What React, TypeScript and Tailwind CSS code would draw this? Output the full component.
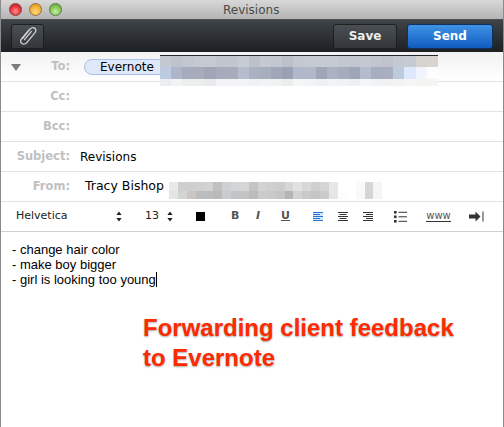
const toRow1 = ["#c4c8d0","#bfc3cb","#c2c6ce","#c5c9d1","#c6cad2","#c1c5cd","#c2c6ce","#c7cbd3","#bdc1c9","#c5c9d1","#c3c7cf","#bcc0c8","#c4c8d0","#c5c9d1","#c6cad2","#c5c9d1","#c3c7cf","#c2c6ce","#c4c8d0","#c1c5cd","#bfc3cb","#c4c8d0","#c6cad2","#d6d3d0","#d8d5d1"];
const toRow2 = ["#bccbe0","#afb6cb","#a6acbd","#a7acbd","#a0a5b8","#a6abbc","#a7acbc","#b6bbce","#a9b2c2","#a7afbf","#a1a6b8","#9ba1b5","#b0b8cb","#b0b8ca","#a0a6b8","#abb2c4","#a6acbe","#9fa6b8","#b4bbce","#a6afc0","#a9afc0","#bccade","#dfe8fb","#eff4fd","#fdfdfe"];
const toRow3 = ["#ebedf0","#f2f3f5","#eceded","#eceded","#e9eaeb","#f3f3f5","#f2f3f4","#f3f4f5","#f0f1f3","#f2f3f4","#f0f1f3","#eceded","#f4f5f6","#f2f3f4","#eff0f1","#f2f3f4","#f1f2f3","#eeeff0","#f4f5f6","#f1f2f3","#f0f1f2","#f3f3f4","#f5f5f6","#f5f4f3","#f5f5f4"];
const fromRow1 = ["#e9e9e9","#cfcfd1","#cfcfd0","#d1d0d1","#d3d2d3","#c0c0c0","#cfd0d3","#d4d5d7","#d6d6d7","#c5c3c5","#d2d2d3","#d0cfce","#cccccf","#d7d7d5","#e2e2e2","#d8d8da","#cfcfd0","#d5d5d5","#e7e7e7","#ffffff","#ffffff","#fafafa","#d7d7d9","#f5f5f5"];
const fromRow2 = ["#e4e4e3","#d4d4d4","#cbc6c2","#bdbdbd","#bdbcbc","#b9b9b9","#cbccce","#c2c3c5","#c3c3c4","#bcbabc","#cbcbcb","#c9c9c8","#c5c5c6","#b5b5b5","#d2d3d5","#c9c9cb","#c4c5c5","#cbcbcd","#e5e6e6","#fdfdfd","#ffffff","#f8f8f8","#d5d5d7","#f5f5f5"];

const labelCls = "w-[69px] shrink-0 text-right text-[11.5px] font-bold text-[#c0c0c0]";

const Mosaic = ({ rows, heights, cell }: { rows: string[][]; heights: number[]; cell: number }) => (
  <div className="flex flex-col">
    {rows.map((row, i) => (
      <div key={i} className="flex" style={{ height: heights[i] }}>
        {row.map((c, j) => (
          <div key={j} style={{ width: cell, background: c }} />
        ))}
      </div>
    ))}
  </div>
);

const Stepper = () => (
  <svg width="6" height="11" viewBox="0 0 6 11" fill="#222">
    <path d="M3 0.5 L5.6 4 H0.4 Z" />
    <path d="M3 10.5 L5.6 7 H0.4 Z" />
  </svg>
);

const AlignIcon = ({ mode, color }: { mode: "left" | "center" | "right"; color: string }) => {
  const long = [0, 4, 8];
  const short = [2, 6];
  const x = mode === "left" ? 0 : mode === "center" ? 1.5 : 3;
  return (
    <svg width="10" height="9" viewBox="0 0 10 9" stroke={color} strokeWidth="1">
      {long.map((y) => (
        <line key={y} x1="0" x2="10" y1={y + 0.5} y2={y + 0.5} />
      ))}
      {short.map((y) => (
        <line key={y} x1={x} x2={x + 7} y1={y + 0.5} y2={y + 0.5} />
      ))}
    </svg>
  );
};

const Row = ({ label, children }: { label: string; children?: React.ReactNode }) => (
  <div className="relative flex h-[30px] shrink-0 items-center border-b border-[#e2e2e2]">
    <span className={labelCls}>{label}</span>
    {children}
  </div>
);

export default function App() {
  return (
    <div className="flex h-[427px] w-[504px] flex-col overflow-hidden border-x border-[#8a8a8a] bg-white font-['DejaVu_Sans',sans-serif]">
      {/* title bar */}
      <div className="flex h-[19px] shrink-0 items-center bg-gradient-to-b from-[#d8d8d8] to-[#b4b4b4] pl-[8px]">
        <div className="flex gap-[7px]">
          <div className="h-[13px] w-[13px] rounded-full border border-[#8f3a3a] bg-[radial-gradient(circle_at_50%_65%,#ff8f8f,#e02a35_60%,#b81e28)]" />
          <div className="h-[13px] w-[13px] rounded-full border border-[#96713a] bg-[radial-gradient(circle_at_50%_70%,#ffdd80,#eeaa2f_60%,#c48a20)]" />
          <div className="h-[13px] w-[13px] rounded-full border border-[#55803f] bg-[radial-gradient(circle_at_50%_70%,#c6f0a0,#7cc150_60%,#5a9c38)]" />
        </div>
        <span className="ml-[161px] text-[12px] leading-none text-[#4a4a4a]">Revisions</span>
      </div>

      {/* toolbar */}
      <div className="flex h-[33px] shrink-0 items-center border-t border-[#4e5052] bg-gradient-to-b from-[#3f4448] to-[#1d2023] pl-[10px]">
        <button className="flex h-[25px] w-[33px] items-center justify-center rounded-[3px] border border-[#1c1e20] bg-gradient-to-b from-[#4a4f54] to-[#33373b]">
          <svg width="18" height="20" viewBox="0 0 18 20" fill="none" stroke="#d4d6d8" strokeWidth="1.2" strokeLinecap="round">
            <path d="M3.5 12.5 L11 3.2 C12.5 1.4 14.8 1.3 16 2.5 C17.2 3.7 16.9 5.6 15.6 7.1 L8 16.4 C6.8 18 4.4 18.8 2.8 17.4 C1.2 16 1.6 13.9 2.8 12.4 L10 3.8 M5.5 13.7 L12.4 5.4" />
          </svg>
        </button>
        <button className="ml-[289px] flex h-[25px] w-[64px] items-center justify-center rounded-[3px] border border-[#1c1e20] bg-gradient-to-b from-[#4a4f54] to-[#33373b] text-[12px] font-bold text-[#eeeeee]">
          Save
        </button>
        <button className="ml-[10px] flex h-[25px] w-[86px] items-center justify-center rounded-[3px] border border-[#12305c] bg-gradient-to-b from-[#3f93e6] to-[#0f5cc0] text-[12px] font-bold text-white">
          Send
        </button>
      </div>

      {/* header fields */}
      <div className="relative flex h-[30px] shrink-0 items-center border-b border-[#e2e2e2] bg-gradient-to-b from-[#f2f2f2] to-white pt-px">
        <div className="absolute left-[10px] top-[12px] h-0 w-0 border-x-[5px] border-t-[7px] border-x-transparent border-t-[#7c7c7c]" />
        <span className={labelCls}>To:</span>
        <div className="ml-[14px] flex h-[16px] w-[90px] items-center rounded-l-full border border-[#a9c0e8] bg-[#dfe8f9] pl-[15px] text-[12px] text-black">
          Evernote
        </div>
        <div className="absolute left-[159px] top-[3px] w-[278px] border-t border-[#23262a]">
          <Mosaic rows={[toRow1, toRow2, toRow3]} heights={[11, 12, 7]} cell={11.12} />
        </div>
      </div>
      <Row label="Cc:" />
      <Row label="Bcc:" />
      <Row label="Subject:">
        <span className="ml-[10px] text-[12px] text-black">Revisions</span>
      </Row>
      <Row label="From:">
        <span className="ml-[15px] text-[12.5px] text-black">Tracy Bishop</span>
        <div className="absolute left-[168px] top-[10px]">
          <Mosaic rows={[fromRow1, fromRow2]} heights={[9, 8]} cell={8.9} />
        </div>
      </Row>

      {/* format bar */}
      <div className="flex h-[30px] shrink-0 items-center border-b border-[#cfcfcf] text-[11px] text-[#222]">
        <span className="ml-[15px] w-[100px]">Helvetica</span>
        <Stepper />
        <span className="ml-[23px] w-[22px]">13</span>
        <Stepper />
        <div className="ml-[23px] h-[9px] w-[9px] bg-black" />
        <span className="ml-[26px] w-[25px] font-bold text-[#555]">B</span>
        <span className="w-[25px] font-bold italic text-[#555]">I</span>
        <span className="w-[32px] font-bold text-[#555] underline">U</span>
        <div className="bg-[#d6e6fa]">
          <AlignIcon mode="left" color="#2a76d2" />
        </div>
        <div className="ml-[15px]"><AlignIcon mode="center" color="#333" /></div>
        <div className="ml-[15px]"><AlignIcon mode="right" color="#333" /></div>
        <svg className="ml-[21px]" width="13" height="12" viewBox="0 0 13 12" fill="#333">
          <rect x="0" y="0" width="2.6" height="2.6" />
          <rect x="0" y="4.5" width="2.6" height="2.6" />
          <rect x="0" y="9" width="2.6" height="2.6" />
          <rect x="4.5" y="0.8" width="8.5" height="1" />
          <rect x="4.5" y="5.3" width="8.5" height="1" />
          <rect x="4.5" y="9.8" width="8.5" height="1" />
        </svg>
        <span className="ml-[19px] w-[25px] border-b border-[#333] text-center text-[10px] leading-[10px] text-[#555]">www</span>
        <svg className="ml-[18px]" width="15" height="11" viewBox="0 0 15 11" fill="#333">
          <path d="M0 3.5 H6.5 V0.5 L11.5 5.5 L6.5 10.5 V7.5 H0 Z" />
          <rect x="13.5" y="0.5" width="1" height="10" />
        </svg>
      </div>

      {/* message body */}
      <div className="relative flex-1 pl-[11px] pt-[10px] font-['Liberation_Sans',sans-serif] text-[13px] leading-[15px] text-black">
        <p>- change hair color</p>
        <p>- make boy bigger</p>
        <p className="flex">
          - girl is looking too young
          <span className="h-[15px] w-px bg-black" />
        </p>
        <div className="absolute left-[142px] top-[81px] text-[24px] font-bold leading-[30px] text-[#ff2a00] [text-shadow:0_1px_2px_rgba(0,0,0,0.35)]">
          Forwarding client feedback
          <br />
          to Evernote
        </div>
      </div>
    </div>
  );
}
